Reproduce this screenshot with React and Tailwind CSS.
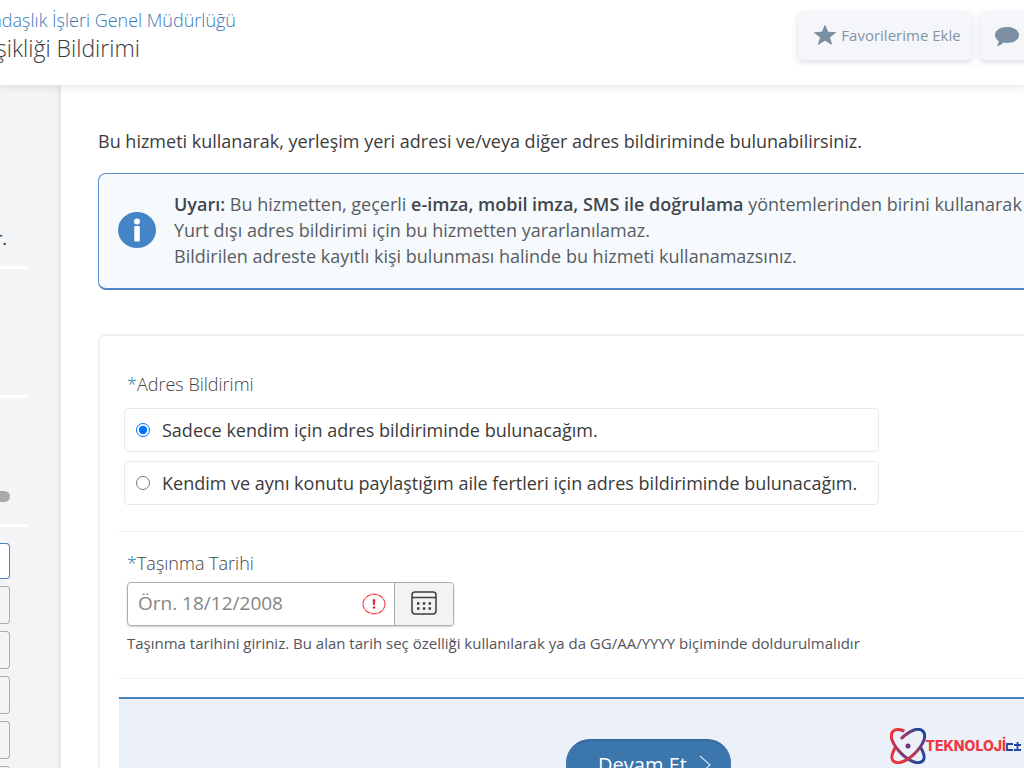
import React, { useState } from "react";

const sideButtons = ["2", "3", "4", "5", "6"];

const options = [
  { id: "self", text: "Sadece kendim için adres bildiriminde bulunacağım." },
  { id: "family", text: "Kendim ve aynı konutu paylaştığım aile fertleri için adres bildiriminde bulunacağım." },
];

function Header() {
  return (
    <header className="relative z-10 flex h-[85px] shrink-0 items-start justify-between bg-white shadow-[0_2px_8px_rgba(0,0,0,0.10)]">
      <div className="flex w-60 flex-col whitespace-nowrap pt-2">
        <div className="flex w-[236px] justify-end text-lg leading-6 font-light text-[#3a78b5]">
          <a href="#kurum">ndaşlık İşleri Genel Müdürlüğü</a>
        </div>
        <h1 className="flex w-[140px] justify-end text-[23px] leading-8 font-light text-[#3b3b3b]">şikliği Bildirimi</h1>
      </div>
      <div className="-mr-9 flex shrink-0 gap-2 pt-3">
        <button type="button" className="flex h-12 w-[174px] items-center justify-center gap-1 rounded-sm bg-[#f4f6f9] pb-0.5 pl-1 text-[15px] whitespace-nowrap text-[#8494a5] shadow-[0_2px_6px_rgba(60,80,110,0.2)]">
          <svg viewBox="0 0 24 24" className="size-6 shrink-0" fill="#7c8ea1" aria-hidden="true">
            <path d="M12 1.500l3.200 7.200 8.300.5-6.500 5.200 2.300 7.600-7.300-4.200-7.300 4.200 2.300-7.600L.5 9.200l8.300-.5z" />
          </svg>
          Favorilerime Ekle
        </button>
        <button type="button" aria-label="Yorum" className="flex h-12 w-20 items-center rounded-sm bg-[#f4f6f9] pl-3.5 shadow-[0_2px_6px_rgba(60,80,110,0.2)]">
          <svg viewBox="0 0 26 22" className="h-[22px] w-[26px]" fill="#7c8ea1" aria-hidden="true">
            <path d="M13 2c6.900 0 12 3.500 12 8s-5.100 8-12 8c-1.200 0-2.400-.1-3.500-.4C7.500 19.600 5.200 21 2.800 21c1-1.300 1.900-3 1.900-5C2.300 14.500 1 12.400 1 10c0-4.500 5.100-8 12-8z" />
          </svg>
        </button>
      </div>
    </header>
  );
}

function Sidebar() {
  return (
    <aside className="flex w-[61px] shrink-0 flex-col bg-[#f2f4f6] shadow-[inset_-6px_0_5px_-4px_rgba(0,0,0,0.08)]">
      <div className="flex h-[184px] w-[27px] shrink-0 items-end border-b-[3px] border-white pb-4 text-lg leading-6 text-[#333]">
        <span className="flex w-[7px] justify-end">r.</span>
      </div>
      <div className="h-[129px] w-7 shrink-0 border-b-[3px] border-white" />
      <div className="flex h-[129px] w-7 shrink-0 items-end border-b-[3px] border-white pb-[22px]">
        <div className="h-[11px] w-2.5 rounded-r-full bg-[#a9a9a9]" />
      </div>
      <div className="flex shrink-0 flex-col gap-[7px] pt-4">
        <button type="button" aria-label="1" className="h-9 w-2.5 rounded-r-sm border border-l-0 border-[#4a80c4] bg-white" />
        {sideButtons.map((n) => (
          <button key={n} type="button" aria-label={n} className="h-[38px] w-2.5 rounded-r-sm border border-l-0 border-[#acacac] bg-[#f4f5f6]" />
        ))}
      </div>
    </aside>
  );
}

function Notice() {
  return (
    <section className="mt-5 flex h-[117px] items-center gap-[18px] rounded-lg border border-b-2 border-[#5a92d3] border-b-[#4f87c6] bg-[#f6fafd] pb-0.5 pl-[19px] text-lg leading-[26px] whitespace-nowrap text-[#585d63]">
      <svg viewBox="0 0 38 36" className="h-9 w-[38px] shrink-0" aria-hidden="true">
        <ellipse cx="19" cy="18" rx="19" ry="18" fill="#4684c8" />
        <circle cx="19" cy="9.500" r="3" fill="#fff" />
        <rect x="16.300" y="14" width="5.500" height="15.500" rx="1" fill="#fff" />
      </svg>
      <div>
        <p><b className="font-semibold text-[#41464d]">Uyarı:</b> Bu hizmetten, geçerli <b className="font-semibold text-[#41464d]">e-imza, mobil imza, SMS ile doğrulama</b> yöntemlerinden birini kullanarak</p>
        <p>Yurt dışı adres bildirimi için bu hizmetten yararlanılamaz.</p>
        <p>Bildirilen adreste kayıtlı kişi bulunması halinde bu hizmeti kullanamazsınız.</p>
      </div>
    </section>
  );
}

function Watermark() {
  return (
    <div className="absolute right-0.5 bottom-1 flex items-center whitespace-nowrap">
      <svg viewBox="0 0 36 36" className="size-9" fill="none" strokeWidth="3" aria-hidden="true">
        <defs>
          <linearGradient id="orbit-a" gradientUnits="userSpaceOnUse" x1="-20" y1="0" x2="20" y2="0">
            <stop offset="0" stopColor="#f0343a" />
            <stop offset="0.500" stopColor="#8a3570" />
            <stop offset="1" stopColor="#20479c" />
          </linearGradient>
          <linearGradient id="orbit-b" gradientUnits="userSpaceOnUse" x1="-20" y1="0" x2="20" y2="0">
            <stop offset="0" stopColor="#f0343a" />
            <stop offset="0.500" stopColor="#b8355a" />
            <stop offset="1" stopColor="#20479c" />
          </linearGradient>
        </defs>
        <g transform="translate(18 18) rotate(45)">
          <path d="M10-8C17-6 21-3 21 0c0 6-9 10-21 10S-21 6-21 0c0-3 3-6 8-8" stroke="url(#orbit-a)" />
        </g>
        <g transform="translate(18 18) rotate(-45)">
          <path d="M-10-8C-17-6-21-3-21 0c0 6 9 10 21 10S21 6 21 0 12-10 0-10" stroke="url(#orbit-b)" />
        </g>
        <circle cx="18" cy="18" r="2.500" fill="#6a3580" />
      </svg>
      <span className="font-['Inter','Open_Sans',sans-serif] text-sm leading-5 font-extrabold text-[#f0383f]">TEKNOLOJİ</span>
      <svg viewBox="0 0 16 10" className="mt-0.5 h-2.5 w-4" fill="none" stroke="#20479c" strokeWidth="1.800" role="img" aria-label="ct">
        <path d="M7 2H1v6h6M8 3h7M11.500 0v8M8 8h7" />
      </svg>
    </div>
  );
}

export default function App() {
  const [choice, setChoice] = useState("self");
  return (
    <div className="relative flex h-screen flex-col overflow-hidden bg-white font-['Open_Sans','Noto_Sans',sans-serif]">
      <Header />
      <div className="flex min-h-0 flex-1">
        <Sidebar />
        <main className="-mr-10 min-w-0 flex-1 pt-11 pl-[37px]">
          <p className="text-lg leading-6 text-[#3c3c3c]">Bu hizmeti kullanarak, yerleşim yeri adresi ve/veya diğer adres bildiriminde bulunabilirsiniz.</p>
          <Notice />
          <form className="mt-11 rounded-lg border-2 border-[#f0f1f2] px-[19px] pt-9" onSubmit={(e) => e.preventDefault()}>
            <fieldset className="border-b border-dotted border-[#e4e4e4] pb-[26px]">
              <legend className="float-left mb-3 w-full pl-2 text-lg leading-6 font-light text-[#3f4347]"><span className="text-[#2c6f9b]">*</span>Adres Bildirimi</legend>
              <div className="clear-both ml-[5px] flex w-[755px] flex-col gap-[9px]">
                {options.map((o) => (
                  <label key={o.id} className="flex h-11 items-center gap-3 rounded-sm border border-[#e9eaec] pl-[11px] text-lg whitespace-nowrap text-[#3a3a3a]">
                    <input type="radio" name="kapsam" checked={choice === o.id} onChange={() => setChoice(o.id)} className="size-3.5 shrink-0" />
                    {o.text}
                  </label>
                ))}
              </div>
            </fieldset>
            <div className="border-b border-dotted border-[#e4e4e4] pt-[19px] pb-[25px] pl-2">
              <label htmlFor="tarih" className="block text-lg leading-6 font-light text-[#3f4347]"><span className="text-[#2c6f9b]">*</span>Taşınma Tarihi</label>
              <div className="mt-[7px] flex h-11 w-[327px] overflow-hidden rounded-sm border border-[#acacac] shadow-[0_1px_2px_rgba(0,0,0,0.2)]">
                <input id="tarih" type="text" placeholder="Örn. 18/12/2008" className="min-w-0 flex-1 pb-0.5 pl-2.5 text-[19px] text-[#333] outline-none placeholder:text-[#858585]" />
                <svg viewBox="0 0 24 22" className="mr-2 h-[22px] w-6 self-center" aria-hidden="true">
                  <ellipse cx="12" cy="11" rx="11" ry="9.800" fill="none" stroke="#f0484c" strokeWidth="1.200" strokeDasharray="6 0.600" />
                  <path d="M10.700 6.300h2.600l-.4 5.700h-1.800z" fill="#e3262b" />
                  <circle cx="12" cy="14.500" r="1.300" fill="#e3262b" />
                </svg>
                <button type="button" aria-label="Tarih seç" className="flex w-[59px] items-center justify-center border-l border-[#acacac] bg-[#f3f3f3]">
                  <svg viewBox="0 0 26 24" className="mb-0.5 h-6 w-[26px]" fill="none" stroke="#3d3d3d" strokeWidth="1.500" aria-hidden="true">
                    <rect x="1" y="1" width="24" height="22" rx="3" />
                    <path d="M1 6.500h24" />
                    <path d="M6 12.500h2.500M11.800 12.500h2.500M17.500 12.500H20M6 17.500h2.500M11.800 17.500h2.500M17.500 17.500H20" strokeWidth="2.500" />
                  </svg>
                </button>
              </div>
              <p className="mt-[7px] text-[15px] leading-5 whitespace-nowrap text-[#52555c]">Taşınma tarihini giriniz. Bu alan tarih seç özelliği kullanılarak ya da GG/AA/YYYY biçiminde doldurulmalıdır</p>
            </div>
            <div className="-mr-5 mt-[18px] flex border-t-2 border-[#4683bd] bg-[#ebf0f9] pt-10 pb-10 pl-[447px]">
              <button type="submit" className="flex h-[50px] w-[165px] items-center justify-center gap-3 rounded-3xl border-t-2 border-[#3569a0] bg-[#3b76ad] pr-1 pl-4 text-xl text-white">
                Devam Et
                <svg viewBox="0 0 12 20" className="h-5 w-3" fill="none" stroke="#cfe0f0" strokeWidth="1.200" aria-hidden="true">
                  <path d="M1 1l10 9-10 9" />
                </svg>
              </button>
            </div>
          </form>
        </main>
      </div>
      <Watermark />
    </div>
  );
}
